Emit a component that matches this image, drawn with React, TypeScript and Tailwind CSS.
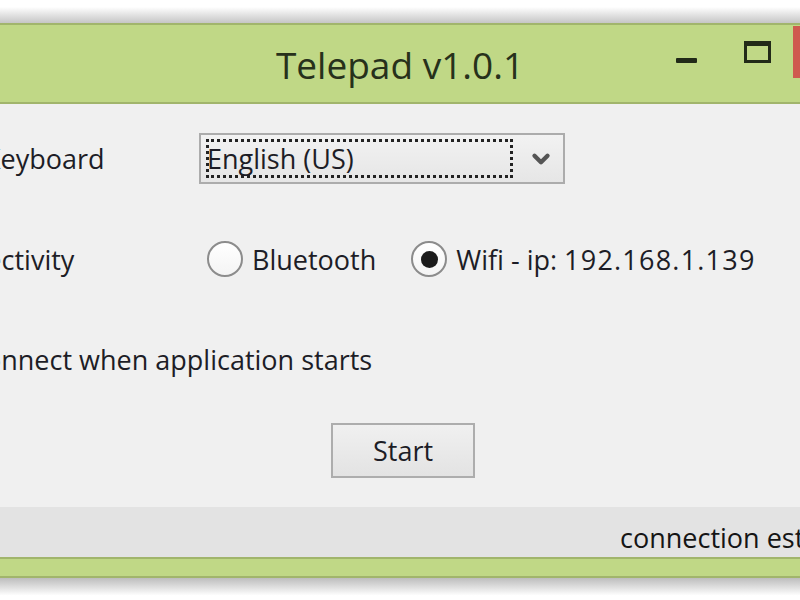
import { ChevronDown } from "lucide-react";

function Radio({ checked }: { checked?: boolean }) {
  return (
    <span className="flex h-[36px] w-[36px] shrink-0 items-center justify-center rounded-full border-2 border-[#8c8c8c] bg-gradient-to-b from-white to-[#f4f4f4]">
      {checked ? <span className="h-[17px] w-[17px] rounded-full bg-[#1b1b1b]" /> : null}
    </span>
  );
}

export default function App() {
  return (
    <div className="flex h-[600px] w-[800px] flex-col overflow-hidden bg-white font-['Open_Sans',sans-serif] text-[27px] text-[#1d1d26]">
      {/* drop shadow above the window */}
      <div className="h-[23px] shrink-0 bg-gradient-to-b from-white from-30% to-[#c6c6c6]" />

      {/* title bar */}
      <header className="relative flex h-[81px] shrink-0 items-center justify-center border-y-2 border-[#a1b56c] bg-[#c0d886] pt-[2px]">
        <span className="text-[37px] leading-none text-[#27311b]">Telepad v1.0.1</span>
        <div className="absolute top-0 right-0 flex h-full items-start">
          <span className="mt-[33px] h-[5px] w-[21px] rounded-[1px] bg-[#222a18]" />
          <span className="mt-[16px] ml-[47px] h-[22px] w-[27px] border-[3px] border-t-[5px] border-[#222a18]" />
          <span className="mt-[1px] ml-[22px] h-[52px] w-[7px] bg-[#cf5a4f]" />
        </div>
      </header>

      {/* form */}
      <main className="flex h-[403px] shrink-0 flex-col bg-[#f0f0f0] leading-[37px]">
        <div className="mt-[29px] flex h-[51px] items-center">
          <div className="w-[199px] shrink-0">
            <span className="-ml-[16px] whitespace-nowrap">Keyboard</span>
          </div>
          <div className="flex h-[51px] w-[366px] items-center border-2 border-[#acacac] bg-gradient-to-b from-[#f2f2f2] to-[#e6e6e6] pl-[5px]">
            <div className="flex h-[39px] w-[307px] items-center border-[3px] border-dotted border-[#222]">
              <span className="-ml-[2px]">English (US)</span>
            </div>
            <ChevronDown className="ml-[15px] h-[26px] w-[26px] text-[#555]" strokeWidth={4} />
          </div>
        </div>

        <div className="mt-[57px] flex h-[36px] items-center">
          <div className="w-[207px] shrink-0">
            <span className="-ml-[80px] whitespace-nowrap">Connectivity</span>
          </div>
          <Radio />
          <span className="ml-[9px]">Bluetooth</span>
          <span className="ml-[35px]">
            <Radio checked />
          </span>
          <span className="ml-[9px] whitespace-nowrap">
            Wifi - ip: <span className="tracking-[0.045em]">192.168.1.139</span>
          </span>
        </div>

        <div className="mt-[64px] flex h-[37px] items-center">
          <span className="-ml-[60px] h-[20px] w-[20px] shrink-0 border-2 border-[#8c8c8c] bg-white" />
          <span className="ml-[8px] whitespace-nowrap">Connect when application starts</span>
        </div>

        <button
          type="button"
          className="mt-[45px] ml-[331px] flex h-[55px] w-[144px] items-center justify-center border-2 border-[#adadad] bg-gradient-to-b from-[#f0f0f0] to-[#e3e3e3] text-[#1d1d26]"
        >
          Start
        </button>
      </main>

      {/* status bar */}
      <footer className="h-[50px] shrink-0 overflow-hidden bg-[#e3e3e3] pt-[12px] pl-[620px] leading-[37px] whitespace-nowrap text-[#151515]">
        connection established
      </footer>

      {/* bottom frame and shadow */}
      <div className="h-[21px] shrink-0 border-y-2 border-[#a1b56c] bg-[#c0d886]" />
      <div className="flex-1 bg-gradient-to-b from-[#bdbdbd] to-white to-80%" />
    </div>
  );
}
